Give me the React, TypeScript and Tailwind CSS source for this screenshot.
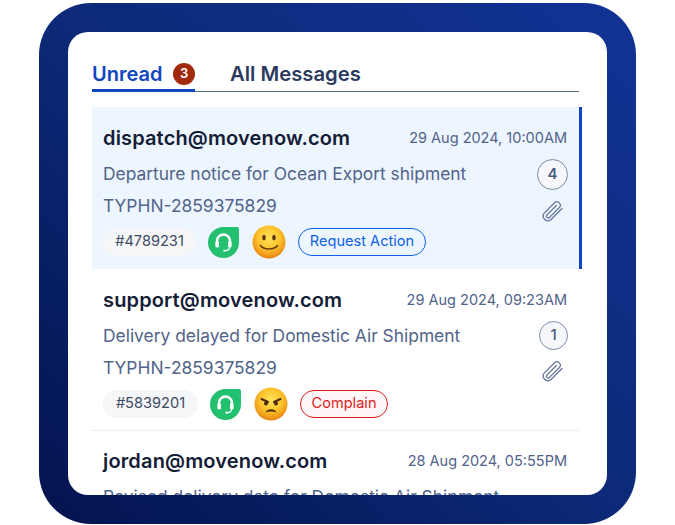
import { useId } from "react";

type Message = {
  email: string;
  date: string;
  subject: string;
  ref: string;
  count: number;
  tag: string;
  mood: "smile" | "angry";
  label: string;
  active?: boolean;
};

const messages: Message[] = [
  {
    email: "dispatch@movenow.com",
    date: "29 Aug 2024, 10:00AM",
    subject: "Departure notice for Ocean Export shipment",
    ref: "TYPHN-2859375829",
    count: 4,
    tag: "#4789231",
    mood: "smile",
    label: "Request Action",
    active: true,
  },
  {
    email: "support@movenow.com",
    date: "29 Aug 2024, 09:23AM",
    subject: "Delivery delayed for Domestic Air Shipment",
    ref: "TYPHN-2859375829",
    count: 1,
    tag: "#5839201",
    mood: "angry",
    label: "Complain",
  },
  {
    email: "jordan@movenow.com",
    date: "28 Aug 2024, 05:55PM",
    subject: "Revised delivery date for Domestic Air Shipment",
    ref: "",
    count: 0,
    tag: "",
    mood: "smile",
    label: "",
  },
];

const Clip = () => (
  <svg width="24" height="24" viewBox="0 0 24 24" fill="none" stroke="#66789b" strokeWidth="1.3" strokeLinecap="round" className="mt-[9px] mr-[4px] shrink-0">
    <path d="M22 9.5 10.8 20.7a4.7 4.7 0 0 1-6.6-6.6L14.6 3.7a3.4 3.4 0 0 1 4.8 4.8L9.3 18.6a1.8 1.8 0 0 1-2.5-2.5L16.4 6.5" />
  </svg>
);

const SupportBadge = () => (
  <svg width="33" height="33" viewBox="0 0 33 33" className="shrink-0">
    <path
      d="M16.5 1H30a2 2 0 0 1 2 2v13.5A15.5 15.5 0 1 1 16.5 1Z"
      fill="#22c06f"
    />
    <path
      d="M10 17v-2a6.5 6.5 0 0 1 13 0v2"
      fill="none"
      stroke="#fff"
      strokeWidth="2.4"
    />
    <rect x="8.4" y="15" width="3.6" height="6.5" rx="1.5" fill="#fff" />
    <rect x="21" y="15" width="3.6" height="6.5" rx="1.5" fill="#fff" />
    <path d="M22.6 21c0 2.8-1.6 3.6-4.4 3.6" fill="none" stroke="#fff" strokeWidth="1.2" />
    <circle cx="17.6" cy="24.6" r="1.2" fill="#fff" />
  </svg>
);

const Emoji = ({ mood }: { mood: "smile" | "angry" }) => {
  const id = useId();
  return (
    <svg width="34" height="34" viewBox="0 0 34 34" className="shrink-0">
      <defs>
        <radialGradient id={id} cx="50%" cy="38%" r="62%">
          <stop offset="0%" stopColor="#ffe35a" />
          <stop offset="55%" stopColor="#fcc32c" />
          <stop offset="85%" stopColor="#f09a18" />
          <stop offset="100%" stopColor="#e57f12" />
        </radialGradient>
      </defs>
      <circle cx="17" cy="17" r="16.5" fill={`url(#${id})`} />
      {mood === "smile" ? (
        <>
          <ellipse cx="12" cy="12.5" rx="1.8" ry="2.8" fill="#5a3510" />
          <ellipse cx="22" cy="12.5" rx="1.8" ry="2.8" fill="#5a3510" />
          <path d="M8.5 20.5c3 4.6 14 4.6 17 0" fill="none" stroke="#6b3f12" strokeWidth="1.5" strokeLinecap="round" />
        </>
      ) : (
        <>
          <path d="M7.5 12l6.5 3M26.5 12l-6.5 3" stroke="#4a2a10" strokeWidth="2" strokeLinecap="round" />
          <circle cx="12" cy="16.5" r="2" fill="#4a2a10" />
          <circle cx="22" cy="16.5" r="2" fill="#4a2a10" />
          <path d="M11.5 25.5c1.8-4.4 9.2-4.4 11 0-3-1.4-8-1.4-11 0Z" fill="#4a2a10" />
        </>
      )}
    </svg>
  );
};

const MessageRow = ({ m, last }: { m: Message; last: boolean }) => (
  <div
    className={
      m.active
        ? "h-[162px] w-[490px] bg-[#edf5fe] border-r-[3px] border-[#0f46c0] pl-[11px] pr-[12px] pt-[20px]"
        : `w-[487px] pl-[11px] pr-[12px] ${last ? "pt-[19px]" : "h-[162px] pt-[20px] border-b border-[#ececec]"}`
    }
  >
    <div className="flex items-center justify-between h-[22px]">
      <span className="text-[20px] font-semibold tracking-[0.15px] text-[#141c36]">{m.email}</span>
      <span className="text-[14.5px] text-[#51648a]">{m.date}</span>
    </div>
    <div className="flex justify-between mt-[14px] h-[54px]">
      <div>
        <p className="text-[17.4px] leading-[22px] text-[#51648a]">{m.subject}</p>
        {m.ref && <p className="text-[17.4px] leading-[22px] mt-[10px] text-[#51648a]">{m.ref}</p>}
      </div>
      {!last && (
        <div className="flex flex-col items-end w-[31px] -mt-[4px] -mr-px">
          <div
            className={`shrink-0 flex items-center justify-center rounded-full border border-[#7d8cab] bg-[#f5f7fb] text-[#4a5a7e] text-[15px] ${
              m.active ? "w-[31px] h-[31px] font-semibold" : "w-[29px] h-[29px] font-medium"
            }`}
          >
            {m.count}
          </div>
          <Clip />
        </div>
      )}
    </div>
    {!last && (
      <div className="flex items-center mt-[8px] h-[34px]">
        <span
          className={`flex items-center justify-center h-[28px] rounded-full bg-[#f5f6f8] text-[14.6px] text-[#3f4a63] ${
            m.active ? "w-[93px]" : "w-[95px]"
          }`}
        >
          {m.tag}
        </span>
        <div className="ml-[11px]">
          <SupportBadge />
        </div>
        <div className="ml-[12px]">
          <Emoji mood={m.mood} />
        </div>
        <span
          className={`ml-[12px] flex items-center justify-center h-[28px] rounded-full border-[1.5px] text-[14.6px] ${
            m.mood === "smile"
              ? "w-[128px] border-[#0f62e6] text-[#0f62e6]"
              : "w-[88px] border-[#e01b1b] text-[#e01b1b] bg-[#fff7f7]"
          }`}
        >
          {m.label}
        </span>
      </div>
    )}
  </div>
);

export default function App() {
  return (
    <div className="w-[675px] h-[525px] bg-white pt-[3px] pl-[39px] font-['Inter',sans-serif]">
      <div className="w-[597px] h-[521px] rounded-[52px] bg-gradient-to-tr from-[#04134f] via-[#0c2a78] to-[#123396] p-[29px]">
        <div className="w-[539px] h-[463px] rounded-[20px] bg-white overflow-hidden pl-[24px] pt-[26px]">
          <div className="flex items-end w-[487px] h-[34px] border-b border-[#5f7096]">
            <div className="flex items-center h-[34px] w-[103px] border-b-[3px] border-[#0f46c0] -mb-px">
              <span className="text-[20px] font-semibold text-[#0f46c0]">Unread</span>
              <span className="ml-[11px] flex items-center justify-center w-[22px] h-[22px] rounded-full bg-[#a12a0c] text-white text-[13px] font-semibold">
                3
              </span>
            </div>
            <div className="flex items-center h-[34px] ml-[35px]">
              <span className="text-[20.3px] font-semibold text-[#2b3a5f]">All Messages</span>
            </div>
          </div>
          <div className="mt-[15px]">
            {messages.map((m, i) => (
              <MessageRow key={m.email} m={m} last={i === messages.length - 1} />
            ))}
          </div>
        </div>
      </div>
    </div>
  );
}
